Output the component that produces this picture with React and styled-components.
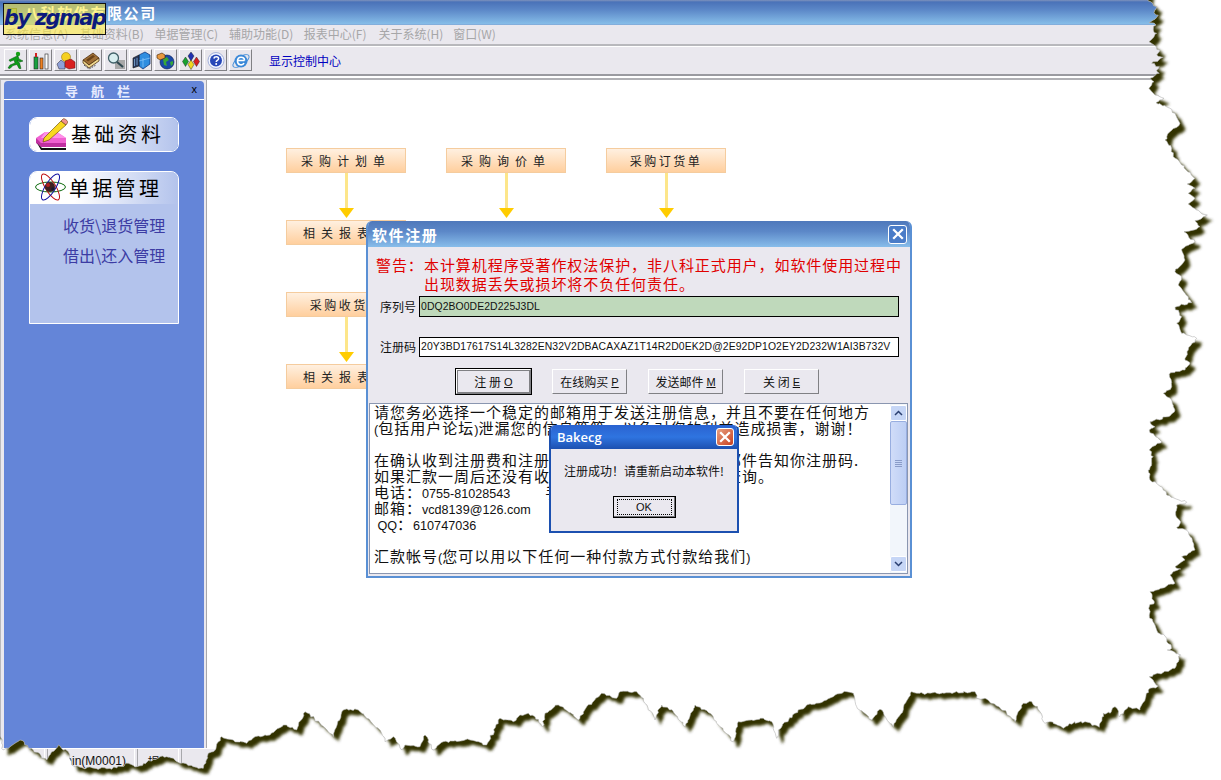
import React from "react";
import styled, { createGlobalStyle } from "styled-components";

const cjk = `"Noto Sans CJK SC", "Liberation Sans", sans-serif`;
const latin = `"Liberation Sans", "Noto Sans CJK SC", sans-serif`;

const GlobalStyle = createGlobalStyle`
    html, body {
        margin: 0;
        padding: 0;
        background: #fff;
        overflow: hidden;
    }
    * {
        box-sizing: border-box;
    }
`;

const Page = styled.div`
    position: relative;
    width: 1221px;
    height: 780px;
    display: flex;
    flex-direction: column;
    font-family: ${cjk};
    background: #eae8ee;
    overflow: hidden;
`;

const TitleBar = styled.div`
    height: 25px;
    flex: none;
    display: flex;
    align-items: center;
    gap: 7px;
    padding-left: 8px;
    background: linear-gradient(#7f93bd 0, #4a72b8 2px, #5c88c8 10px, #86bde8 24px, #7f9fd0 25px);
`;

const AppIcon = styled.span`
    width: 9px;
    height: 10px;
    background: #6f9a58;
    border: 1px solid #3c5a34;
`;

const AppTitle = styled.span`
    color: #fff;
    font-size: 15px;
    font-weight: 700;
    letter-spacing: 1.6px;
    line-height: 20px;
`;

const MenuBar = styled.div`
    height: 21px;
    flex: none;
    display: flex;
    align-items: center;
    padding: 0 0 2px 5px;
    border-bottom: 2px solid #b8b8bc;
    box-shadow: 0 1px 0 #fff;
`;

const MenuItem = styled.span`
    width: 74.7px;
    color: #a6a6a8;
    font-size: 12px;
    white-space: nowrap;
`;

const ToolBar = styled.div`
    height: 30px;
    flex: none;
    display: flex;
    align-items: center;
    gap: 2px;
    padding: 0 0 0 4px;
    border-bottom: 2px solid #9a9aa0;
`;

const ToolButton = styled.span`
    width: 23px;
    height: 22px;
    display: flex;
    align-items: center;
    justify-content: center;
    background: #e8e6ec;
    border: 1px solid;
    border-color: #fff #808084 #808084 #fff;
`;

const ToolLink = styled.span`
    margin-left: 15px;
    color: #0000c0;
    font-size: 12px;
`;

const Workspace = styled.div`
    flex: 1;
    min-height: 0;
    display: flex;
    padding-top: 2px;
    background: linear-gradient(#fff 0, #fff 2px, #b0b0b4 2px, #b0b0b4 4px, #fff 4px);
`;

const Sidebar = styled.div`
    width: 207px;
    flex: none;
    display: flex;
    flex-direction: column;
    margin-top: 2px;
    padding: 1px 2px 0 4px;
    background: #eae8ee;
    border-right: 1px solid #a8a8ac;
    border-left: 1px solid #b8b8bc;
`;

const SideHeader = styled.div`
    position: relative;
    height: 19px;
    flex: none;
    display: flex;
    align-items: center;
    justify-content: center;
    margin-left: -1px;
    color: #e8ecff;
    background: #6485d8;
    border-bottom: 1px solid #fff;
    border-radius: 4px 4px 0 0;
    font-size: 13px;
    font-weight: 700;
    letter-spacing: 13px;
`;

const SideClose = styled.span`
    position: absolute;
    right: 7px;
    top: 2px;
    color: #000;
    font-family: ${latin};
    font-size: 11px;
    font-weight: 400;
    letter-spacing: 0;
`;

const SideBody = styled.div`
    flex: 1;
    display: flex;
    flex-direction: column;
    gap: 19px;
    margin-left: -1px;
    padding: 17px 25px 0;
    background: #6485d8;
`;

const Card = styled.div`
    border: 1px solid #fff;
    border-radius: ${(p) => (p.$open ? "8px 8px 0 0" : "8px")};
    overflow: hidden;
    background: #b3c3ec;
`;

const CardHead = styled.div`
    height: ${(p) => p.$height}px;
    display: flex;
    align-items: center;
    gap: 3px;
    padding: 0 0 2px 5px;
    background: linear-gradient(90deg, #fff 30%, #b3c3ec 100%);
    color: #000;
    font-size: 20px;
    letter-spacing: 3.3px;
`;

const CardBody = styled.div`
    height: 119px;
    display: flex;
    flex-direction: column;
    gap: 7px;
    padding: 10px 0 0 33px;
`;

const CardLink = styled.span`
    color: #3c3ca4;
    font-size: 16px;
    line-height: 23px;
    white-space: nowrap;
`;

const Content = styled.div`
    flex: 1;
    padding: 70px 0 0 79px;
`;

const Flow = styled.div`
    display: grid;
    grid-template-columns: repeat(3, 120px);
    gap: 40px;
    align-items: start;
`;

const FlowColumn = styled.div`
    display: flex;
    flex-direction: column;
`;

const FlowNode = styled.div`
    height: 25px;
    display: flex;
    align-items: center;
    justify-content: center;
    padding-right: ${(p) => p.$inset || 0}px;
    margin-bottom: ${(p) => p.$after || 0}px;
    background: linear-gradient(#fff0e0, #ffcf9e);
    border: 1px solid #f5cc9e;
    color: #222;
    font-size: 12px;
    letter-spacing: ${(p) => p.$spacing}px;
    white-space: nowrap;
`;

const Arrow = styled.div`
    height: 47px;
    display: flex;
    justify-content: center;
`;

const Window = styled.div`
    position: absolute;
    left: ${(p) => p.$left}px;
    top: ${(p) => p.$top}px;
    width: ${(p) => p.$width}px;
    height: ${(p) => p.$height}px;
    display: flex;
    flex-direction: column;
    background: #eae8ef;
    border: 2px solid ${(p) => p.$edge};
    border-top: none;
    border-radius: 6px 6px 0 0;
    overflow: hidden;
`;

const WindowTitle = styled.div`
    height: ${(p) => p.$height}px;
    flex: none;
    margin: 0 -2px;
    display: flex;
    align-items: center;
    justify-content: space-between;
    padding: 0 ${(p) => p.$pad}px 0 6px;
    background: ${(p) => p.$fill};
    color: #fff;
`;

const RegTitle = styled.span`
    font-size: 15px;
    font-weight: 700;
    letter-spacing: 1.6px;
`;

const AlertTitle = styled.span`
    padding-left: 2px;
    font-family: "Open Sans", sans-serif;
    font-size: 13px;
    font-weight: 600;
`;

const WindowClose = styled.span`
    width: ${(p) => p.$size}px;
    height: ${(p) => p.$size}px;
    display: flex;
    align-items: center;
    justify-content: center;
    background: ${(p) => p.$fill};
    border: 1px solid #fff;
    border-radius: 3px;
`;

const Warning = styled.div`
    display: flex;
    padding: 8px 0 0 8px;
    height: 49px;
    flex: none;
    color: #e00000;
    font-size: 15px;
    line-height: 19px;
    letter-spacing: 0.93px;
`;

const WarningLabel = styled.span`
    width: 48px;
    flex: none;
    white-space: nowrap;
`;

const WarningText = styled.span`
    white-space: nowrap;
`;

const Field = styled.div`
    height: 21px;
    flex: none;
    display: flex;
    align-items: center;
    gap: 3px;
    padding-left: 12px;
    margin-bottom: ${(p) => p.$after}px;
    color: #111;
    font-size: 12px;
`;

const FieldValue = styled.div`
    width: 480px;
    height: ${(p) => p.$height}px;
    display: flex;
    align-items: center;
    padding: 0 0 1px 1px;
    background: ${(p) => p.$fill};
    border: 1px solid #000;
    font-family: ${latin};
    font-size: 10.4px;
    letter-spacing: 0.09px;
    white-space: nowrap;
    overflow: hidden;
`;

const ButtonRow = styled.div`
    height: 25px;
    flex: none;
    display: flex;
    gap: 21px;
    margin: 12px 0 9px 88px;
`;

const Button = styled.span`
    width: 75px;
    height: 25px;
    display: flex;
    align-items: center;
    justify-content: center;
    gap: 3px;
    background: #eae8ef;
    border: 1px solid;
    border-color: #fff #808084 #808084 #fff;
    outline: ${(p) => (p.$main ? "1px solid #000" : "none")};
    box-shadow: ${(p) => (p.$main ? "inset 0 0 0 1px #808084" : "none")};
    font-size: 12px;
    color: #111;
    white-space: nowrap;
`;

const Hotkey = styled.span`
    font-family: ${latin};
    font-size: 11px;
    text-decoration: underline;
`;

const MemoBox = styled.div`
    flex: 1;
    min-height: 0;
    display: flex;
    margin: 0 2px 2px 1px;
    background: #fff;
    border: 1px solid #8a96b0;
`;

const Memo = styled.div`
    flex: 1;
    overflow: hidden;
    padding: 0 0 0 4px;
    color: #111;
    font-size: 15px;
    line-height: 16px;
    letter-spacing: 1px;
    white-space: pre;
`;

const Num = styled.span`
    font-family: ${latin};
    font-size: 12.6px;
    line-height: 0;
    letter-spacing: 0;
`;

const Scroll = styled.div`
    width: 17px;
    flex: none;
    display: flex;
    flex-direction: column;
    background: #f2f6fb;
    padding: 1px 0;
`;

const ScrollButton = styled.span`
    height: 16px;
    flex: none;
    display: flex;
    align-items: center;
    justify-content: center;
    background: #c6d6f6;
    border: 1px solid #fff;
    border-radius: 2px;
`;

const ScrollTrack = styled.div`
    flex: 1;
`;

const ScrollThumb = styled.div`
    height: 84px;
    display: flex;
    flex-direction: column;
    align-items: center;
    justify-content: center;
    gap: 1px;
    background: linear-gradient(90deg, #d0dcf8, #bccef4);
    border: 1px solid #98aee0;
    border-radius: 2px;
`;

const Grip = styled.span`
    width: 7px;
    height: 1px;
    background: #8a9cc8;
`;

const AlertBody = styled.div`
    flex: 1;
    display: flex;
    flex-direction: column;
    align-items: center;
`;

const AlertText = styled.div`
    margin: 13px 0 16px;
    color: #111;
    font-size: 12px;
    line-height: 18px;
    white-space: nowrap;
`;

const OkButton = styled.span`
    width: 63px;
    height: 22px;
    display: flex;
    align-items: center;
    justify-content: center;
    border: 1px solid #000;
    box-shadow: inset -1px -1px 0 #707074;
    font-family: ${latin};
    font-size: 11px;
    color: #111;
`;

const OkLabel = styled.span`
    width: 55px;
    height: 16px;
    display: flex;
    align-items: center;
    justify-content: center;
    border: 1px dotted #000;
`;

const StatusBar = styled.div`
    position: absolute;
    left: 0;
    right: 0;
    bottom: 0;
    height: 32px;
    display: flex;
    gap: 2px;
    background: #eae8ee;
    border-top: 1px solid #fff;
`;

const StatusCell = styled.span`
    width: ${(p) => p.$width}px;
    height: 22px;
    display: flex;
    align-items: center;
    justify-content: ${(p) => p.$justify};
    padding: 2px 8px 0 3px;
    border-left: 1px solid #a8a8ac;
    border-right: 1px solid #fff;
    font-family: ${latin};
    font-size: 12px;
    color: #111;
    white-space: nowrap;
`;

const Watermark = styled.div`
    position: absolute;
    left: 3px;
    top: 3px;
    width: 103px;
    height: 32px;
    display: flex;
    align-items: center;
    justify-content: center;
    padding-bottom: 2px;
    background: rgba(255, 236, 60, 0.58);
    border: 1px solid #111;
    color: #0c1a7c;
    font-family: "DejaVu Sans", sans-serif;
    font-size: 21px;
    font-style: italic;
    font-weight: 700;
    letter-spacing: -1.6px;
    white-space: nowrap;
`;

const TornOverlay = styled.svg`
    position: absolute;
    left: 0;
    top: 0;
    width: 1221px;
    height: 780px;
    pointer-events: none;
`;

// outline of the torn page, read off the reference in zoomed crops
const rightA = [
    [445, 3], [470, 20], [462, 38], [475, 45], [465, 58], [447, 68], [468, 75], [460, 90], [470, 100], [462, 110],
    [447, 125], [462, 135], [480, 150], [470, 165], [490, 172], [455, 190], [478, 200], [470, 210], [478, 220],
    [450, 235], [462, 245], [447, 265], [465, 285], [492, 295], [468, 308], [515, 328], [525, 340], [540, 370],
    [510, 395], [495, 420], [515, 445], [520, 470], [545, 495], [585, 535],
].map(([x, y]) => [1000 + x / 3, y / 3]);

const rightB = [
    [262, 12], [285, 25], [265, 40], [285, 55], [265, 72], [290, 90], [322, 105], [285, 122], [300, 140], [252, 155],
    [285, 185], [245, 208], [255, 240], [225, 275], [245, 290], [235, 315], [255, 340], [275, 368], [225, 382],
    [245, 410], [230, 430], [245, 460], [290, 475], [265, 510], [255, 540], [270, 548], [255, 570], [208, 583],
    [215, 620], [190, 640], [215, 660], [225, 690], [205, 710], [150, 725], [165, 740], [148, 750], [185, 785],
    [148, 810], [160, 830], [148, 870],
].map(([x, y]) => [1100 + x / 3, 180 + y / 3]);

const rightC = [
    [265, 0], [270, 30], [285, 35], [310, 60], [320, 75], [380, 97], [350, 105], [347, 135], [362, 155], [350, 172],
    [385, 185], [398, 215], [405, 240], [365, 260], [375, 270], [345, 290], [362, 297], [330, 315], [345, 340],
    [270, 365], [283, 398], [268, 410], [268, 435], [285, 465], [290, 480], [320, 505], [335, 535], [322, 540],
    [362, 555], [345, 595], [268, 620], [295, 648], [265, 660], [240, 720], [205, 710], [180, 740], [165, 710],
    [150, 730], [130, 730], [118, 772], [75, 755], [45, 760],
].map(([x, y]) => [1060 + x / 3, 470 + y / 3]);

const bottomA = [
    [1035, 185], [1000, 205], [960, 185], [945, 190], [930, 155], [905, 125], [880, 130], [855, 185], [830, 160],
    [765, 115], [740, 115], [735, 95], [620, 100], [560, 100], [545, 95], [490, 200], [450, 148], [425, 180],
    [380, 140], [370, 100], [350, 95], [310, 110], [290, 120], [230, 135], [195, 160], [145, 210], [140, 235],
    [125, 185], [100, 175], [65, 180], [25, 185], [10, 245],
].map(([x, y]) => [730 + x / 3, 660 + y / 3]);

const bottomB = [
    [1060, 215], [1020, 170], [990, 130], [945, 105], [915, 170], [880, 125], [845, 105], [825, 150], [790, 85],
    [770, 65], [720, 65], [710, 85], [665, 70], [620, 110], [595, 150], [535, 105], [495, 130], [487, 170],
    [465, 140], [445, 130], [420, 135], [400, 155], [360, 145], [320, 225], [270, 210], [190, 215], [160, 240],
    [135, 195], [120, 230], [75, 225], [65, 240], [40, 200], [15, 215],
].map(([x, y]) => [380 + x / 3, 670 + y / 3]);

const bottomC = [
    [1140, 150], [1100, 115], [1075, 90], [1030, 90], [1000, 170], [985, 155], [960, 130], [915, 95], [890, 150],
    [850, 135], [810, 165], [765, 170], [740, 190], [700, 180], [665, 170], [640, 215], [625, 220], [610, 265],
    [580, 260], [540, 250], [520, 235], [500, 230], [480, 230], [410, 260], [385, 250], [350, 264], [290, 266],
    [240, 262], [215, 255], [205, 215], [175, 195], [140, 240], [100, 210], [60, 180], [25, 205], [10, 210], [0, 160],
].map(([x, y]) => [x / 3, 680 + y / 3]);

const buildTornPath = () => {
    const outline = [[1148, -20], ...rightA, ...rightB, ...rightC, ...bottomA, ...bottomB, ...bottomC];
    let seed = 17;
    const rand = () => {
        seed = (seed * 16807) % 2147483647;
        return seed / 2147483647 - 0.5;
    };
    let d = "M-20 -20L1148 -20";
    for (let i = 1; i < outline.length; i++) {
        const [x0, y0] = outline[i - 1];
        const [x1, y1] = outline[i];
        const len = Math.hypot(x1 - x0, y1 - y0);
        const steps = Math.max(1, Math.round(len / 2.5));
        for (let s = 1; s <= steps; s++) {
            const t = s / steps;
            const amp = s === steps ? 0 : 2.4;
            const x = x0 + (x1 - x0) * t + rand() * amp;
            const y = y0 + (y1 - y0) * t + rand() * amp;
            d += `L${x.toFixed(1)} ${y.toFixed(1)}`;
        }
    }
    return `${d}L-20 733Z`;
};

const tornPath = buildTornPath();

const TornEdge = () => (
    <TornOverlay viewBox="0 0 1221 780">
        <defs>
            <clipPath id="outside">
                <path clipRule="evenodd" d={`M-40 -40H1261V820H-40Z${tornPath}`} />
            </clipPath>
            <filter id="soft" x="-5%" y="-5%" width="110%" height="110%">
                <feGaussianBlur stdDeviation="1.8" />
            </filter>
        </defs>
        <g clipPath="url(#outside)">
            <rect width="1221" height="780" fill="#fff" />
            <path d={tornPath} fill="#333300" filter="url(#soft)" transform="translate(5.5 5.5)" />
        </g>
        <path d={tornPath} fill="none" stroke="#b4b4b4" strokeWidth="0.6" />
    </TornOverlay>
);

const toolIcons = [
    <svg key="run" width="19" height="19" viewBox="0 0 19 19">
        <circle cx="12" cy="3" r="2.2" fill="#18a018" />
        <path d="M11 5 7 7 3 9l1 1.5L8 9l1 3-5 2-2 3 2 .5 3-3 4-1 2 4h2l-1.5-5.500L11 9l3 2 3-1-4-2-1-3z" fill="#0c9c18" stroke="#064c0c" strokeWidth=".5" />
    </svg>,
    <svg key="tubes" width="19" height="19" viewBox="0 0 19 19">
        <rect x="3" y="6" width="4" height="12" fill="#18a040" stroke="#222" strokeWidth=".6" />
        <path d="M4 2h2v4H4z" fill="#d02020" />
        <rect x="9" y="7" width="3" height="11" fill="#f08020" stroke="#222" strokeWidth=".6" />
        <rect x="14" y="3" width="3" height="15" fill="#fff" stroke="#222" strokeWidth=".6" />
    </svg>,
    <svg key="shapes" width="20" height="19" viewBox="0 0 20 19">
        <circle cx="10" cy="6" r="4.500" fill="#f5d020" stroke="#8a6a00" strokeWidth=".5" />
        <path d="M1 13l4-4 4 3v6H3z" fill="#8ea0d8" stroke="#223" strokeWidth=".5" />
        <path d="M9 10l6-2 4 3v6l-6 1-4-2z" fill="#d82020" stroke="#601010" strokeWidth=".5" />
    </svg>,
    <svg key="books" width="20" height="19" viewBox="0 0 20 19">
        <path d="M2 9 12 2l6 5-10 7z" fill="#a07038" stroke="#402000" strokeWidth=".7" />
        <path d="M2 9v3l6 5 10-7V7L8 14z" fill="#f0d890" stroke="#402000" strokeWidth=".7" />
        <path d="M5 9l7-5 2 1.500-7 5z" fill="#6a4218" />
        <path d="M3 14l5 4 7-4" fill="none" stroke="#222" strokeWidth="1" strokeDasharray="1 1" />
    </svg>,
    <svg key="search" width="20" height="19" viewBox="0 0 20 19">
        <rect x="9" y="9" width="10" height="9" fill="#a8a8a8" />
        <circle cx="7.500" cy="7" r="5" fill="#d8eef0" stroke="#406068" strokeWidth="1.300" />
        <path d="M11 11l6 5" stroke="#304850" strokeWidth="2.200" />
    </svg>,
    <svg key="cube" width="20" height="19" viewBox="0 0 20 19">
        <path d="M8 4l6-3 5 3v9l-7 5-4-3z" fill="#2f8de0" stroke="#0a2a70" strokeWidth=".7" />
        <path d="M2 7l6-3v11l-6 2z" fill="#2a3a60" stroke="#111" strokeWidth=".6" />
        <path d="M3.500 8v7M6 7v7M12 7v9M8 10l11-3" stroke="#9ad0ff" strokeWidth=".6" />
    </svg>,
    <svg key="globe" width="20" height="19" viewBox="0 0 20 19">
        <circle cx="11" cy="11" r="7" fill="#1a4aa8" stroke="#0a1a50" strokeWidth=".6" />
        <path d="M7 8l4-2 2 3-3 2 1 4-3-1zM14 11l3-1v3l-2 2z" fill="#38a838" />
        <path d="M1 4l5-2 3 2v3L4 9 1 7z" fill="#e89a40" stroke="#402000" strokeWidth=".6" />
    </svg>,
    <svg key="gems" width="20" height="19" viewBox="0 0 20 19">
        <path d="M10 1l3 4-3 5-3-5z" fill="#2030b0" stroke="#111" strokeWidth=".4" />
        <path d="M4.500 6l3 4.500-3 5-3-5z" fill="#18a030" stroke="#111" strokeWidth=".4" />
        <path d="M15.500 6l3 4.500-3 5-3-5z" fill="#d82020" stroke="#111" strokeWidth=".4" />
        <path d="M10 9l3 4.500-3 5-3-5z" fill="#f0d820" stroke="#111" strokeWidth=".4" />
    </svg>,
    <svg key="help" width="20" height="19" viewBox="0 0 20 19">
        <circle cx="10" cy="9.500" r="8" fill="#f0f4ff" stroke="#90a0d0" strokeWidth=".8" />
        <circle cx="10" cy="9.500" r="6" fill="#2848b8" />
        <path d="M7.800 7.500c.5-2.500 4.800-2.500 4.800 0 0 2-2.400 1.800-2.400 3.600" fill="none" stroke="#fff" strokeWidth="1.500" />
        <circle cx="10.200" cy="13" r="1" fill="#fff" />
    </svg>,
    <svg key="ie" width="20" height="19" viewBox="0 0 20 19">
        <ellipse cx="10" cy="10" rx="9.500" ry="4" fill="none" stroke="#4a90d8" strokeWidth="1" transform="rotate(-35 10 10)" />
        <circle cx="10" cy="10" r="6.500" fill="#3a88d8" />
        <path d="M6.500 9.500h7M13.500 9.500c0-4.500-7-4.500-7 .5s5.500 4.500 6.500 2" fill="none" stroke="#fff" strokeWidth="1.600" />
    </svg>,
];

const PencilIcon = () => (
    <svg width="33" height="33" viewBox="0 0 33 33">
        <path d="M1 21 10 15h12l9 6v9H6z" fill="#f060d0" />
        <path d="M1 21l5 5h25v4H6l-5-4z" fill="#c030a0" />
        <path d="M2 26l5 5h24v2H6z" fill="#111" />
        <path d="M10 15h12l9 6H6z" fill="#ff90e8" />
        <path d="M9 21 26 4l5 4-17 15-6 2z" fill="#f8d820" stroke="#604000" strokeWidth=".6" />
        <path d="M26 4l2-2c1-1 4 1 5 3l-2 3z" fill="#f09090" stroke="#604000" strokeWidth=".6" />
    </svg>
);

const AtomIcon = () => (
    <svg width="31" height="28" viewBox="0 0 31 28">
        <ellipse cx="15.500" cy="14" rx="15" ry="5" fill="none" stroke="#0c6a0c" strokeWidth="1" />
        <ellipse cx="15.500" cy="14" rx="15" ry="5" fill="none" stroke="#c01010" strokeWidth="1" transform="rotate(58 15.500 14)" />
        <ellipse cx="15.500" cy="14" rx="15" ry="5" fill="none" stroke="#1010a0" strokeWidth="1" transform="rotate(-58 15.500 14)" />
        <circle cx="15" cy="14" r="5" fill="#402020" />
        <circle cx="13" cy="12" r="2" fill="#b02020" />
        <circle cx="18" cy="16" r="1.800" fill="#181830" />
    </svg>
);

const Chevron = ({ up }) => (
    <svg width="9" height="6" viewBox="0 0 9 6">
        <path d={up ? "M1 5l3.500-3.500L8 5" : "M1 1l3.500 3.500L8 1"} fill="none" stroke="#2a3f70" strokeWidth="1.500" />
    </svg>
);

const CrossIcon = ({ size }) => (
    <svg width={size} height={size} viewBox="0 0 10 10">
        <path d="M1 1l8 8M9 1l-8 8" stroke="#fff" strokeWidth="1.900" />
    </svg>
);

const FlowArrow = () => (
    <Arrow>
        <svg width="15" height="47" viewBox="0 0 15 47">
            <rect x="6" width="3" height="36" fill="#fde68a" />
            <path d="M0 35h15l-7.500 10z" fill="#ffcc00" />
        </svg>
    </Arrow>
);

const menus = ["系统信息(A)", "基础资料(B)", "单据管理(C)", "辅助功能(D)", "报表中心(F)", "关于系统(H)", "窗口(W)"];

const App = () => {
    return (
        <Page>
            <GlobalStyle />
            <TitleBar>
                <AppIcon />
                <AppTitle>八科软件有限公司</AppTitle>
            </TitleBar>
            <MenuBar>
                {menus.map((m) => (
                    <MenuItem key={m}>{m}</MenuItem>
                ))}
            </MenuBar>
            <ToolBar>
                {toolIcons.map((icon) => (
                    <ToolButton key={icon.key}>{icon}</ToolButton>
                ))}
                <ToolLink>显示控制中心</ToolLink>
            </ToolBar>
            <Workspace>
                <Sidebar>
                    <SideHeader>
                        导航栏
                        <SideClose>x</SideClose>
                    </SideHeader>
                    <SideBody>
                        <Card>
                            <CardHead $height={33}>
                                <PencilIcon />
                                基础资料
                            </CardHead>
                        </Card>
                        <Card $open>
                            <CardHead $height={32}>
                                <AtomIcon />
                                单据管理
                            </CardHead>
                            <CardBody>
                                <CardLink>收货\退货管理</CardLink>
                                <CardLink>借出\还入管理</CardLink>
                            </CardBody>
                        </Card>
                    </SideBody>
                </Sidebar>
                <Content>
                    <Flow>
                        <FlowColumn>
                            <FlowNode $spacing={6}>采购计划单</FlowNode>
                            <FlowArrow />
                            <FlowNode $spacing={6} $inset={14} $after={47}>相关报表</FlowNode>
                            <FlowNode $spacing={2.500}>采购收货单</FlowNode>
                            <FlowArrow />
                            <FlowNode $spacing={6} $inset={14}>相关报表</FlowNode>
                        </FlowColumn>
                        <FlowColumn>
                            <FlowNode $spacing={6}>采购询价单</FlowNode>
                            <FlowArrow />
                        </FlowColumn>
                        <FlowColumn>
                            <FlowNode $spacing={2.500}>采购订货单</FlowNode>
                            <FlowArrow />
                        </FlowColumn>
                    </Flow>
                </Content>
            </Workspace>
            <StatusBar>
                <StatusCell $width={45} />
                <StatusCell $width={88} $justify="flex-end">Admin(M0001)</StatusCell>
                <StatusCell $width={42} $justify="flex-start">&nbsp;&nbsp;提示</StatusCell>
                <StatusCell $width={60} />
            </StatusBar>

            <Window $left={366} $top={221} $width={546} $height={357} $edge="#5a90d4">
                <WindowTitle $height={26} $pad={5} $fill="linear-gradient(#4f78bb, #5c88c8 40%, #88bdea)">
                    <RegTitle>软件注册</RegTitle>
                    <WindowClose $size={19} $fill="#4a7cc8">
                        <CrossIcon size={12} />
                    </WindowClose>
                </WindowTitle>
                <Warning>
                    <WarningLabel>{"警告\uFF1A"}</WarningLabel>
                    <WarningText>
                        {"本计算机程序受著作权法保护\uFF0C非八科正式用户\uFF0C如软件使用过程中"}
                        <br />
                        出现数据丢失或损坏将不负任何责任。
                    </WarningText>
                </Warning>
                <Field $after={19}>
                    序列号
                    <FieldValue $height={21} $fill="#bfd9bb">0DQ2BO0DE2D225J3DL</FieldValue>
                </Field>
                <Field $after={0}>
                    注册码
                    <FieldValue $height={20} $fill="#fff">20Y3BD17617S14L3282EN32V2DBACAXAZ1T14R2D0EK2D@2E92DP1O2EY2D232W1AI3B732V</FieldValue>
                </Field>
                <ButtonRow>
                    <Button $main>注 册<Hotkey>O</Hotkey></Button>
                    <Button>在线购买<Hotkey>P</Hotkey></Button>
                    <Button>发送邮件<Hotkey>M</Hotkey></Button>
                    <Button>关 闭<Hotkey>E</Hotkey></Button>
                </ButtonRow>
                <MemoBox>
                    <Memo>
                        {"请您务必选择一个稳定的邮箱用于发送注册信息\uFF0C并且不要在任何地方\n"}
                        <Num>(</Num>包括用户论坛<Num>)</Num>{"泄漏您的信息等等\uFF0C以免对您的利益造成损害\uFF0C谢谢\uFF01\n\n"}
                        {"在确认收到注册费和注册信息后\uFF0C我们将在一天内邮件告知你注册码.\n"}
                        {"如果汇款一周后还没有收到注册码\uFF0C请来电或来信查询。\n"}
                        {"电话\uFF1A"}<Num>0755-81028543</Num>{"        手机\n"}
                        {"邮箱\uFF1A"}<Num>vcd8139@126.com</Num>{"\n"}
                        <Num> QQ</Num>{"\uFF1A"}<Num>610747036</Num>{"\n\n"}
                        汇款帐号<Num>(</Num>您可以用以下任何一种付款方式付款给我们<Num>)</Num>
                    </Memo>
                    <Scroll>
                        <ScrollButton><Chevron up /></ScrollButton>
                        <ScrollThumb>
                            <Grip />
                            <Grip />
                            <Grip />
                            <Grip />
                        </ScrollThumb>
                        <ScrollTrack />
                        <ScrollButton><Chevron /></ScrollButton>
                    </Scroll>
                </MemoBox>
            </Window>

            <Window $left={549} $top={425} $width={190} $height={108} $edge="#1c50b0">
                <WindowTitle $height={24} $pad={5} $fill="linear-gradient(#2a62d0, #2f74e0 50%, #1c50b0)">
                    <AlertTitle>Bakecg</AlertTitle>
                    <WindowClose $size={18} $fill="linear-gradient(135deg, #e8a080, #c84020)">
                        <CrossIcon size={12} />
                    </WindowClose>
                </WindowTitle>
                <AlertBody>
                    <AlertText>{"注册成功\uFF01请重新启动本软件!"}</AlertText>
                    <OkButton>
                        <OkLabel>OK</OkLabel>
                    </OkButton>
                </AlertBody>
            </Window>

            <Watermark>by zgmap</Watermark>
            <TornEdge />
        </Page>
    );
};

export default App;
